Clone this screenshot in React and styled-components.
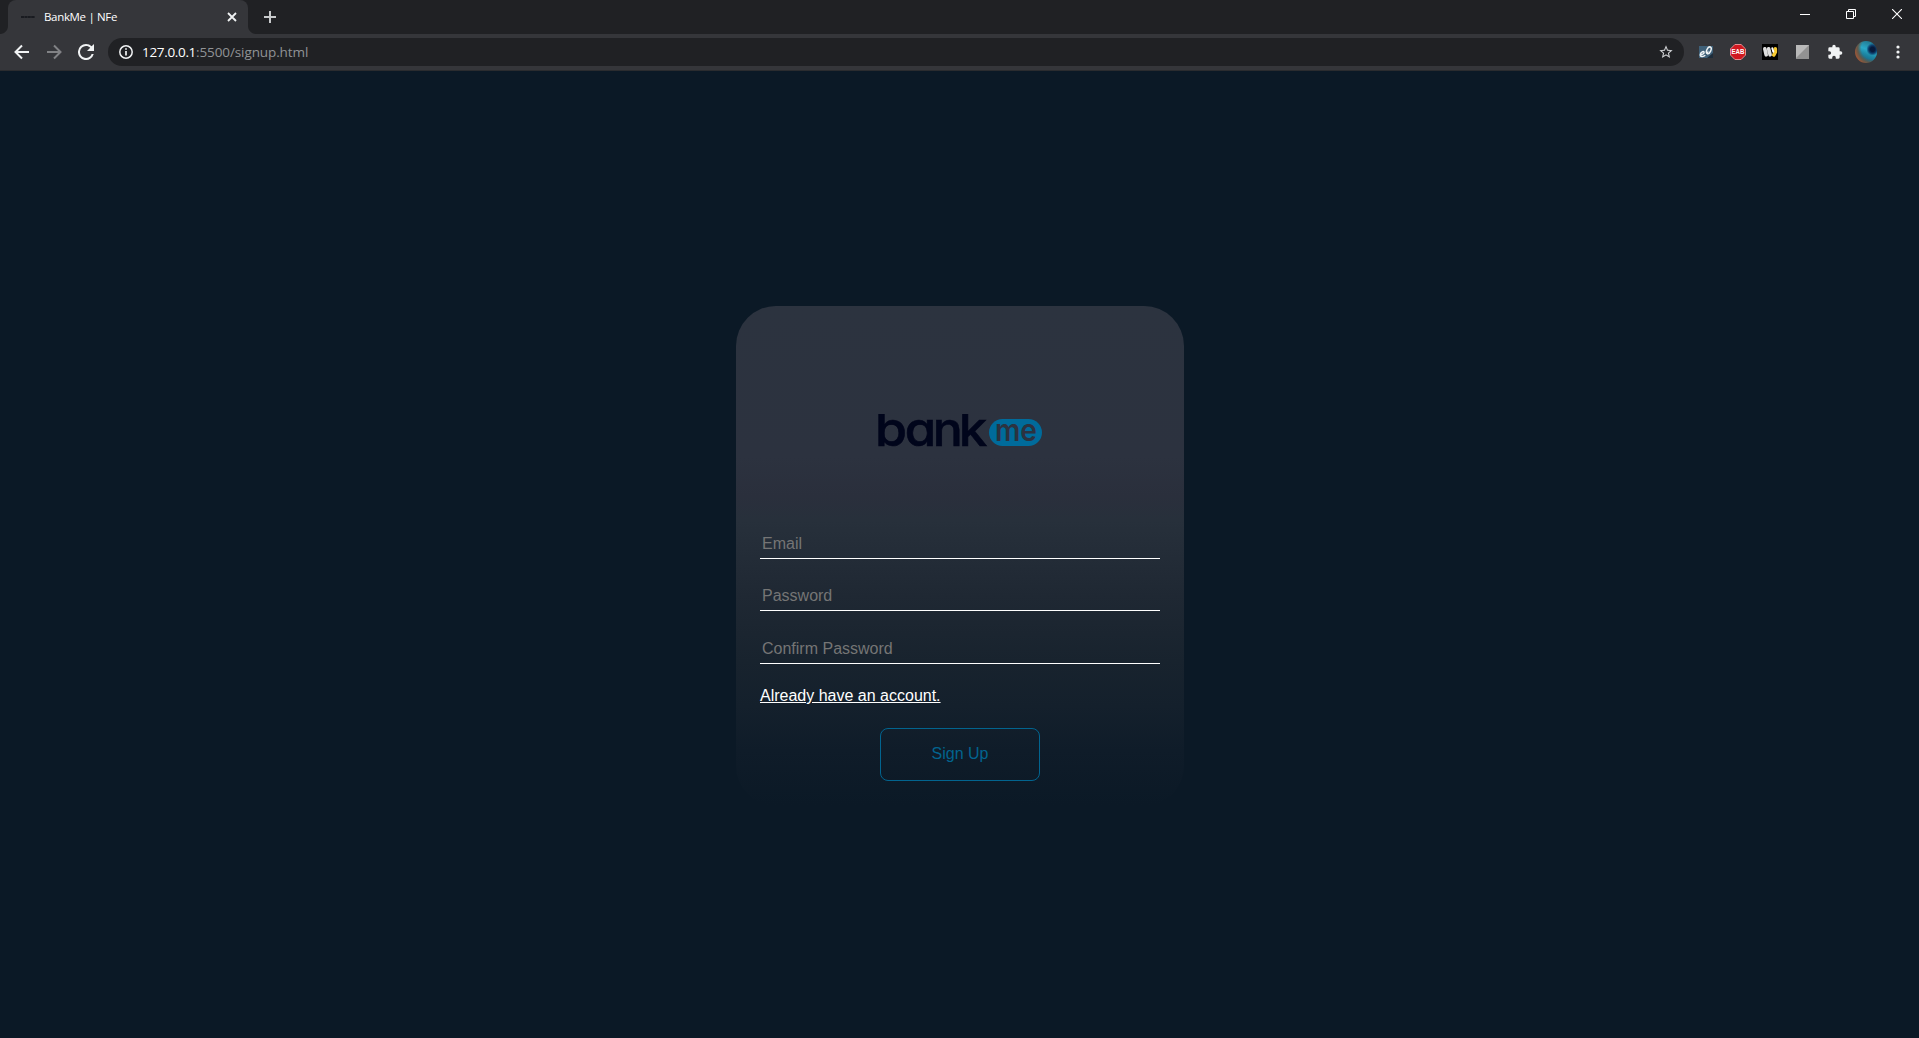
import React from "react";
import styled, { createGlobalStyle } from "styled-components";

const Global = createGlobalStyle`
  * { box-sizing: border-box; }
  body { margin: 0; background: #0b1926; overflow: hidden; font-family: "Liberation Sans", Arial, sans-serif; }
`;
const Page = styled.div`
  display: flex;
  flex-direction: column;
  height: 100vh;
`;
const TabStrip = styled.header`
  display: flex;
  height: 34px;
  padding-left: 8px;
  background: #202124;
`;
const Tab = styled.div`
  position: relative;
  display: flex;
  align-items: center;
  width: 240px;
  padding: 0 10px 0 13px;
  border-radius: 8px 8px 0 0;
  background: #35363a;
  color: #fff;
  &::before, &::after {
    content: "";
    position: absolute;
    bottom: 0;
    width: 8px;
    height: 8px;
  }
  &::before { left: -8px; background: radial-gradient(circle at 0 0, transparent 7.5px, #35363a 8.5px); }
  &::after { right: -8px; background: radial-gradient(circle at 100% 0, transparent 7.5px, #35363a 8.5px); }
`;
const Favicon = styled.svg`
  margin-right: 9px;
`;
const TabTitle = styled.span`
  flex: 1;
  padding-bottom: 2px;
  font: 11.5px "Open Sans", "Noto Sans", sans-serif;
  letter-spacing: -0.33px;
  white-space: nowrap;
`;
const NewTab = styled.div`
  display: flex;
  align-items: center;
  margin-left: 16px;
`;
const WindowButtons = styled.div`
  display: flex;
  margin-left: auto;
  margin-right: -1px;
`;
const WindowButton = styled.div`
  display: grid;
  place-items: center;
  width: 46px;
  height: 28px;
`;
const Toolbar = styled.nav`
  display: flex;
  align-items: center;
  height: 37px;
  padding: 0 0 1px 14px;
  background: #35363a;
  border-bottom: 1px solid #2b2c2f;
`;
const NavIcons = styled.div`
  display: flex;
  flex: none;
  gap: 16px;
  width: 94px;
`;
const Omnibox = styled.div`
  display: flex;
  flex: none;
  align-items: center;
  width: 1576px;
  height: 28px;
  padding: 0 10px 0 11px;
  border-radius: 14px;
  background: #202124;
`;
const Url = styled.span`
  flex: 1;
  margin-left: 9px;
  font: 13.5px "Open Sans", "Noto Sans", sans-serif;
  letter-spacing: -0.1px;
  color: #919396;
`;
const Host = styled.span`
  color: #fff;
  letter-spacing: -0.33px;
`;
const Extensions = styled.div`
  display: flex;
  flex: none;
  align-items: center;
  margin-left: 6px;
`;
const Slot = styled.div`
  display: grid;
  place-items: center;
  width: ${(p) => p.$w || 32}px;
`;
const Avatar = styled.span`
  width: 22px;
  height: 22px;
  border-radius: 50%;
  background:
    radial-gradient(circle at 80% 38%, #071a3c 0 10%, #0c3d6c 18%, transparent 28%),
    radial-gradient(circle at 78% 34%, transparent 0 48%, #5f5a4c 64%, #9a5638 78%),
    linear-gradient(20deg, #11577a 10%, #1d87a4 42%, #2aa9c8 60%, #23809a 85%);
`;
const Content = styled.main`
  display: flex;
  flex: 1;
  flex-direction: column;
  align-items: center;
  padding-top: 235px;
`;
const Card = styled.form`
  display: flex;
  flex-direction: column;
  width: 448px;
  height: 500px;
  margin-left: 1px;
  padding: 88px 24px 0;
  border-radius: 40px;
  background: linear-gradient(#2c333f 0, #2c323f 150px, #2a2f3c 190px, #27303b 215px, #1f2833 290px, #18232e 355px, #14202c 400px, #0f1c29 445px, #0b1926 500px);
`;
const Logo = styled.svg`
  align-self: center;
  flex: none;
  margin-bottom: 62px;
`;
const Field = styled.input`
  width: 400px;
  height: 39px;
  margin: 0 0 ${(p) => p.$gap}px;
  padding: 9px 2px 0;
  border: 0;
  border-bottom: 1px solid #fff;
  outline: 0;
  background: transparent;
  color: #fff;
  font: 16px "Liberation Sans", Arial, sans-serif;
  &::placeholder { color: #757575; opacity: 1; }
`;
const AccountLink = styled.a`
  align-self: flex-start;
  margin-top: 23px;
  color: #fff;
  font-size: 16px;
  line-height: 18px;
  text-decoration: underline;
`;
const Submit = styled.button`
  align-self: center;
  width: 160px;
  height: 53px;
  margin-top: 23px;
  padding: 0 0 1px;
  border: 1px solid #02648f;
  border-radius: 8px;
  background: transparent;
  color: #02648f;
  font: 16px "Liberation Sans", Arial, sans-serif;
`;

const Wordmark = styled.text`
  font-family: Inter, sans-serif;
  font-feature-settings: "cv11" 1;
  font-weight: ${(p) => p.$weight};
  font-size: ${(p) => p.$size}px;
`;

const bankLetters = [
  { char: "b", x: -3, length: 32 },
  { char: "a", x: 26.8, length: 31.5 },
  { char: "n", x: 54.8, length: 30 },
  { char: "k", x: 80.8, length: 28.5 },
];

function BankMeLogo() {
  return (
    <Logo width="172" height="64" viewBox="-4 -20 172 64" role="img" aria-label="bankme">
      <clipPath id="ascender"><rect x="-4" y="0" width="172" height="34" /></clipPath>
      <g clipPath="url(#ascender)">
        {bankLetters.map((l) => (
          <Wordmark key={l.char} $weight={500} $size={48} x={l.x} y="31.5" textLength={l.length} lengthAdjust="spacingAndGlyphs" fill="#00051b" stroke="#00051b" strokeWidth="0.6">
            {l.char}
          </Wordmark>
        ))}
      </g>
      <rect x="111" y="5" width="53" height="27" rx="13.5" fill="#006b9b" />
      <Wordmark $weight={600} $size={30} x="117" y="26.5" textLength="42" lengthAdjust="spacingAndGlyphs" fill="#2c3240">me</Wordmark>
    </Logo>
  );
}

const Material = ({ d, color = "#f1f3f4", size = 20 }) => (
  <svg width={size} height={size} viewBox="0 0 24 24" fill={color}><path d={d} /></svg>
);

export default function App() {
  return (
    <Page>
      <Global />
      <TabStrip>
        <Tab>
          <Favicon width="14" height="4" viewBox="0 0 14 4">
            <path d="M0 2h14" stroke="#191b20" strokeWidth="2" strokeDasharray="3 .4" />
          </Favicon>
          <TabTitle>BankMe | NFe</TabTitle>
          <svg width="12" height="12" viewBox="0 0 12 12" stroke="#f1f3f4" strokeWidth="1.8"><path d="M2 2l8 8M10 2l-8 8" /></svg>
        </Tab>
        <NewTab>
          <svg width="12" height="12" viewBox="0 0 12 12" stroke="#c8cacc" strokeWidth="2"><path d="M6 0v12M0 6h12" /></svg>
        </NewTab>
        <WindowButtons>
          <WindowButton><svg width="10" height="10" stroke="#fff"><path d="M0 5.5h10" /></svg></WindowButton>
          <WindowButton><svg width="10" height="10" fill="none" stroke="#fff"><path d="M.5 2.5h7v7h-7zM2.5 2.5v-2h7v7h-2" /></svg></WindowButton>
          <WindowButton><svg width="10" height="10" stroke="#fff" strokeWidth="1.1"><path d="M0 0l10 10M10 0L0 10" /></svg></WindowButton>
        </WindowButtons>
      </TabStrip>
      <Toolbar>
        <NavIcons>
          <svg width="16" height="16" viewBox="0 0 16 16" fill="none" stroke="#f1f3f4" strokeWidth="2"><path d="M15 8H2.5M8 1.5L1.5 8 8 14.5" /></svg>
          <svg width="16" height="16" viewBox="0 0 16 16" fill="none" stroke="#818285" strokeWidth="2"><path d="M1 8h12.5M8 1.5L14.5 8 8 14.5" /></svg>
          <svg width="16" height="16" viewBox="4 4 16 16" fill="#f1f3f4"><path d="M17.65 6.35A7.96 7.96 0 0 0 12 4a8 8 0 1 0 7.73 10h-2.08A6 6 0 1 1 12 6c1.66 0 3.14.69 4.22 1.78L13 11h7V4z" /></svg>
        </NavIcons>
        <Omnibox>
          <svg width="14" height="14" viewBox="0 0 14 14" fill="none" stroke="#f1f3f4" strokeWidth="1.5"><circle cx="7" cy="7" r="6.2" /><path d="M7 3.2v1.6M7 6v4.5" strokeWidth="1.7" /></svg>
          <Url><Host>127.0.0.1</Host>:5500/signup.html</Url>
          <Material size={16} color="#d0d2d4" d="M22 9.24l-7.19-.62L12 2 9.19 8.63 2 9.24l5.46 4.73L5.82 21 12 17.27 18.18 21l-1.63-7.03zM12 15.4l-3.76 2.27 1-4.28-3.32-2.88 4.38-.38L12 6.1l1.71 4.04 4.38.38-3.32 2.88 1 4.28z" />
        </Omnibox>
        <Extensions>
          <Slot>
            <svg width="14" height="14" viewBox="0 0 14 14"><path fill="#3f6078" d="M0 1h14v12H0z" /><path fill="#1e2d3b" d="M8 13l6-5v5z" /><g fill="none" stroke="#f0f4f6" strokeWidth="1.5"><path d="M1.5 9.500c2.500 0 4-1.200 3.500-2.500-.8-1-3.500.3-3.700 2.500-.2 2.500 3 2.600 5 .8" /><ellipse cx="9.800" cy="5.300" rx="2" ry="3.600" transform="rotate(25 9.800 5.300)" /></g><path fill="#f0f4f6" d="M7 8l2.500-2.500L9 9.500z" /></svg>
          </Slot>
          <Slot>
            <svg width="16" height="16" viewBox="0 0 16 16"><path d="M4.9.5h6.200l4.400 4.400v6.200l-4.400 4.400H4.900L.5 11.100V4.900z" fill="#d01820" stroke="#e78b8e" /><text x="8" y="10.300" textAnchor="middle" textLength="13" lengthAdjust="spacingAndGlyphs" fontFamily="Liberation Sans, sans-serif" fontWeight="700" fontSize="6.500" fill="#fff">EAB</text></svg>
          </Slot>
          <Slot>
            <svg width="16" height="16" viewBox="0 0 16 16"><path fill="#000" d="M0 0h16v16H0z" /><g fill="none" strokeWidth="3.600" strokeLinecap="round"><path stroke="#dedede" d="M2.800 4.800l1.400 6M6.600 4.800l1.500 6" /><path stroke="#f7ca31" d="M13.300 4.800v3.200l-1.500 3" /><path stroke="#fff" strokeWidth="2" d="M10.300 4.200l1 3.500" /></g></svg>
          </Slot>
          <Slot $w={33}>
            <svg width="13" height="14" viewBox="0 0 13 14"><path fill="#929292" d="M0 0h13v14H0z" /><path fill="#b9b9b9" d="M0 0h13L0 13z" /></svg>
          </Slot>
          <Slot $w={31}>
            <Material size={16} d="M20.500 11H19V7a2 2 0 0 0-2-2h-4V3.500a2.500 2.500 0 0 0-5 0V5H4a2 2 0 0 0-2 2v3.800h1.500a2.700 2.700 0 0 1 0 5.400H2V20a2 2 0 0 0 2 2h3.800v-1.500a2.700 2.700 0 0 1 5.400 0V22H17a2 2 0 0 0 2-2v-4h1.500a2.500 2.500 0 0 0 0-5z" />
          </Slot>
          <Slot $w={32}><Avatar /></Slot>
          <Slot $w={32}>
            <svg width="4" height="14" viewBox="0 0 4 14" fill="#f1f3f4"><circle cx="2" cy="2" r="1.6" /><circle cx="2" cy="7" r="1.6" /><circle cx="2" cy="12" r="1.6" /></svg>
          </Slot>
        </Extensions>
      </Toolbar>
      <Content>
        <Card onSubmit={(e) => e.preventDefault()}>
          <BankMeLogo />
          <Field type="email" placeholder="Email" $gap={13} />
          <Field type="password" placeholder="Password" $gap={14} />
          <Field type="password" placeholder="Confirm Password" $gap={0} />
          <AccountLink>Already have an account.</AccountLink>
          <Submit type="submit">Sign Up</Submit>
        </Card>
      </Content>
    </Page>
  );
}
